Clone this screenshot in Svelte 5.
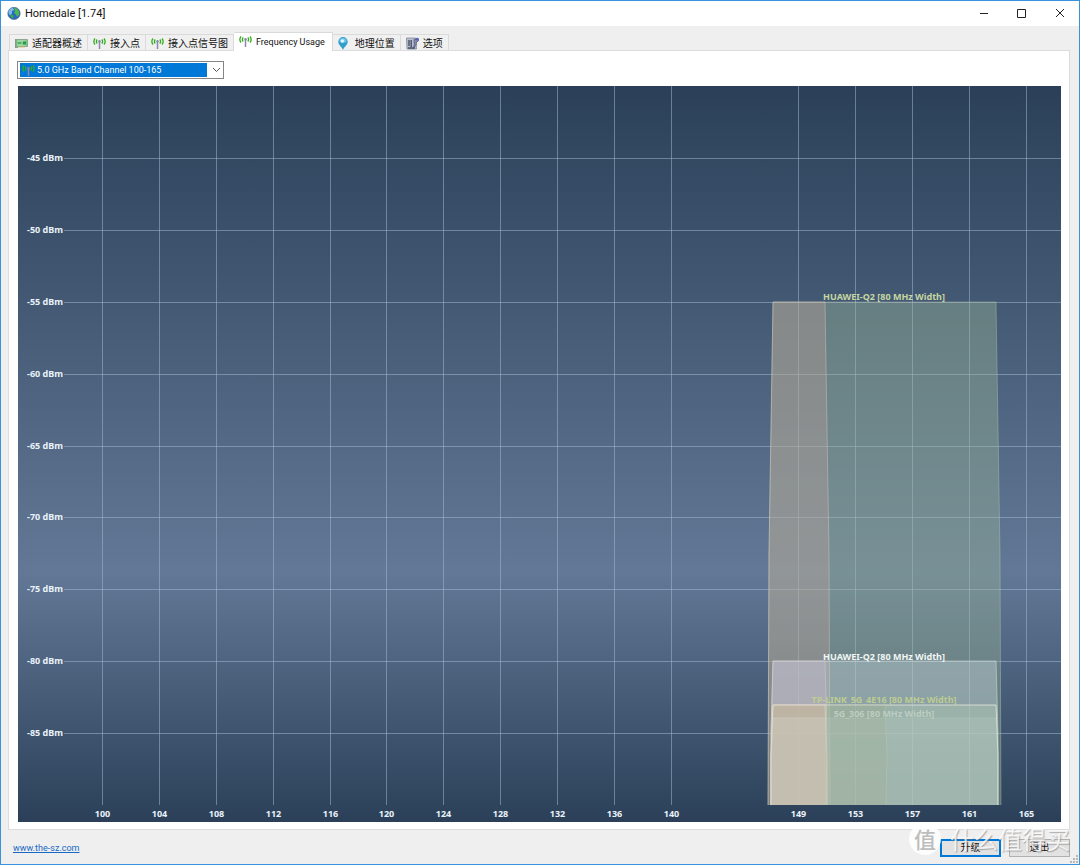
<script lang="ts">
	interface Tab {
		label: string;
		icon: 'card' | 'signal' | 'pin' | 'options';
		latin?: boolean;
	}

	interface Area {
		points: string;
		fill: string;
		stroke: string;
	}

	const tabs: Tab[] = [
		{ label: '适配器概述', icon: 'card' },
		{ label: '接入点', icon: 'signal' },
		{ label: '接入点信号图', icon: 'signal' },
		{ label: 'Frequency Usage', icon: 'signal', latin: true },
		{ label: '地理位置', icon: 'pin' },
		{ label: '选项', icon: 'options' }
	];

	let active = $state(3);

	const levels = [-45, -50, -55, -60, -65, -70, -75, -80, -85];
	const channels = [100, 104, 108, 112, 116, 120, 124, 128, 132, 136, 140, 149, 153, 157, 161, 165];

	const channelX = (ch: number) => Math.round(84.2 + (ch - 100) * 14.21) + 0.5;
	const levelY = (dbm: number) => Math.round(72 + (-45 - dbm) * 14.375) + 0.5;

	const baseline = 719;

	// Each network is a trapezoid that widens slightly toward the baseline
	function area(left: number, right: number, top: number, spread: number, fill: string, stroke: string): Area {
		const mid = Math.round(top + (baseline - top) * 0.5);
		const half = Math.round(spread / 2) + 1;
		return {
			points: `${left - spread},${baseline} ${left - half},${mid} ${left},${top} ${right},${top} ${right + half},${mid} ${right + spread},${baseline}`,
			fill,
			stroke
		};
	}

	const areas: Area[] = [
		area(755, 978, 216, 5, 'rgba(155, 183, 149, 0.4)', 'rgba(200, 215, 190, 0.35)'),
		area(755, 807, 216, 5, 'rgba(206, 163, 157, 0.3)', 'rgba(215, 205, 190, 0.45)'),
		area(755, 978, 575, 2, 'rgba(197, 213, 219, 0.4)', 'rgba(225, 230, 230, 0.5)'),
		area(755, 807, 575, 2, 'rgba(203, 187, 213, 0.3)', 'rgba(225, 215, 215, 0.4)'),
		area(755, 978, 619, 2, 'rgba(178, 205, 180, 0.4)', 'rgba(235, 235, 225, 0.75)'),
		area(755, 807, 619, 2, 'rgba(212, 172, 138, 0.4)', 'rgba(235, 225, 210, 0.5)'),
		area(809, 867, 619, 1, 'rgba(155, 165, 125, 0.25)', 'rgba(200, 215, 180, 0.3)'),
		area(755, 978, 632, 2, 'rgba(190, 208, 200, 0.22)', 'rgba(205, 220, 205, 0.2)'),
		area(755, 807, 632, 2, 'rgba(220, 208, 195, 0.25)', 'rgba(225, 220, 210, 0.2)')
	];

	const networks = [
		{ name: 'HUAWEI-Q2 [80 MHz Width]', y: 214, color: '#c6d6a1' },
		{ name: 'HUAWEI-Q2 [80 MHz Width]', y: 574, color: '#f2f6f4' },
		{ name: 'TP-LINK_5G_4E16 [80 MHz Width]', y: 617, color: '#bdcc92' },
		{ name: '5G_306 [80 MHz Width]', y: 631, color: '#bccdc1' }
	];
</script>

{#snippet signalIcon()}
	<svg class="icon" viewBox="0 0 13 13" aria-hidden="true">
		<g fill="none" stroke="#32b01c" stroke-width="1.3">
			<path d="M2 1.5Q-.3 4.5 2 7.5M4.2 2.5Q2.6 4.5 4.2 6.5M11 1.5Q13.3 4.5 11 7.5M8.8 2.5Q10.4 4.5 8.8 6.5" />
		</g>
		<path d="M6.5 4.5V12" stroke="#8f88ad" stroke-width="1.5" />
		<circle cx="6.5" cy="4.3" r="1.2" fill="#8b83b5" />
	</svg>
{/snippet}

{#snippet tabIcon(name: Tab['icon'])}
	{#if name === 'signal'}
		{@render signalIcon()}
	{:else if name === 'card'}
		<svg class="icon" viewBox="0 0 13 13" aria-hidden="true">
			<path d="M.5 2V11" stroke="#8b9b91" />
			<path d="M1 2.5h11.5v7H3v1H1z" fill="#7cc886" stroke="#78917c" stroke-width=".7" />
			<path d="M2.5 4h8M2.5 8h8" stroke="#c4e9c4" stroke-width=".9" />
			<path d="M3 5h3v2H3z" fill="#4fae62" />
			<path d="M8 4.5h3v3H8z" fill="#279b46" />
			<path d="M4 10h6" stroke="#d4b85b" stroke-width=".8" />
		</svg>
	{:else if name === 'pin'}
		<svg class="icon" viewBox="0 0 13 13" aria-hidden="true">
			<path d="M5 13C4 9.8.3 8 .3 4.7a4.7 4.7 0 0 1 9.4 0C9.7 8 6 9.8 5 13z" fill="#319fce" />
			<path d="M1.5 4.5a3.5 3.5 0 0 1 7 0C7 6.4 3.5 6.4 1.5 4.5z" fill="#70c9ec" />
			<circle cx="4.3" cy="4" r="1.7" fill="#e5f8ff" />
		</svg>
	{:else}
		<svg class="icon" viewBox="0 0 13 13" aria-hidden="true">
			<path d="M.5 1h9l1 11H1z" fill="#b9c0cd" stroke="#7f8799" stroke-width=".8" />
			<path d="M3 3v6M5.2 3v7M2 11h7" stroke="#454f68" stroke-width="1.4" />
			<path d="M7 10.5c2-1 1-4.5 1-8L12 1.5c1 2 .5 3-1.5 3.5-.5 2 .5 4.5-3.5 5.5z" fill="#8489b6" stroke="#505779" stroke-width=".8" />
			<circle cx="11.3" cy="2.2" r="1.4" fill="#5963b4" />
		</svg>
	{/if}
{/snippet}

<div class="window">
	<header class="titlebar">
		<svg class="globe" viewBox="0 0 14 14" aria-hidden="true">
			<circle cx="7" cy="6.4" r="6.2" fill="#2868c4" stroke="#4b6787" stroke-width=".6" />
			<path d="M1.5 4Q3 1 5.5.8L7.5 3 5 4 5 6.5 3.5 8.5Q1 7 1.5 4z" fill="#7fb9e6" />
			<path d="M7 .8l3 .8L12.5 5 12 8 10 10 9 7.5 7 6 8 4z" fill="#4db651" />
			<path d="M3 7.5l3 .5 1 1.5-1.5 2Q3 10.5 3 7.5z" fill="#3ba548" />
		</svg>
		<h1>Homedale [1.74]</h1>
		<div class="controls">
			<button aria-label="Minimize"><svg viewBox="0 0 10 10"><path d="M1 4.5h8" /></svg></button>
			<button aria-label="Maximize"><svg viewBox="0 0 10 10"><path d="M.5.5h8v8h-8z" /></svg></button>
			<button aria-label="Close"><svg viewBox="0 0 10 10"><path d="M1 0l8 8M9 0L1 8" /></svg></button>
		</div>
	</header>

	<div class="tabs" role="tablist">
		{#each tabs as tab, i}
			<button class="tab" class:active={active === i} class:latin={tab.latin} role="tab" aria-selected={active === i} onclick={() => (active = i)}>
				{@render tabIcon(tab.icon)}
				<span>{tab.label}</span>
			</button>
		{/each}
	</div>

	<main class="panel">
		<div class="combo">
			<select aria-label="Band">
				<option>5.0 GHz Band Channel 100-165</option>
			</select>
			<span class="combo-icon">{@render signalIcon()}</span>
			<svg class="chevron" viewBox="0 0 9 6" aria-hidden="true"><path d="M1 1l3.5 3.5L8 1" /></svg>
		</div>

		<svg class="chart" viewBox="0 0 1043 736" role="img" aria-label="Frequency Usage">
			<defs>
				<linearGradient id="backdrop" x1="0" y1="0" x2="0" y2="1">
					<stop offset="0" stop-color="#2b4058" />
					<stop offset="0.66" stop-color="#627896" />
					<stop offset="1" stop-color="#2b4058" />
				</linearGradient>
			</defs>
			<rect width="1043" height="736" fill="url(#backdrop)" />

			<g class="grid">
				{#each levels as level}
					<line x1="46" x2="1043" y1={levelY(level)} y2={levelY(level)} />
				{/each}
				{#each channels as channel}
					<line x1={channelX(channel)} x2={channelX(channel)} y1="0" y2={baseline} />
				{/each}
			</g>

			{#each areas as a}
				<polygon points={a.points} fill={a.fill} />
				<polyline points={a.points} fill="none" stroke={a.stroke} />
			{/each}

			<g class="labels">
				{#each levels as level}
					<text x="9" y={levelY(level) + 2.5}>{level} dBm</text>
				{/each}
				{#each channels as channel}
					<text class="center" x={channelX(channel)} y="731">{channel}</text>
				{/each}
				{#each networks as network}
					<text class="center" x="866" y={network.y} style:fill={network.color}>{network.name}</text>
				{/each}
			</g>
		</svg>
	</main>

	<footer>
		<a class="latin" href="http://www.the-sz.com">www.the-sz.com</a>
		<div class="actions">
			<button class="primary">升级</button>
			<button>退出</button>
		</div>
		<div class="watermark" aria-hidden="true">
			<span class="badge">值</span>
			<span class="brand">什么值得买</span>
		</div>
		<svg class="grip" viewBox="0 0 8 8" aria-hidden="true">
			<path d="M6 0h2v2H6zM3 3h2v2H3zM6 3h2v2H6zM0 6h2v2H0zM3 6h2v2H3zM6 6h2v2H6z" fill="#b8b8b8" />
		</svg>
	</footer>
</div>

<style>
	:global(body) {
		margin: 0;
	}

	.window {
		box-sizing: border-box;
		min-height: 100vh;
		border: 1px solid #3993dc;
		background: #efefef;
		font-family: Roboto, 'Noto Sans CJK SC', sans-serif;
		font-size: 10px;
		color: #111;
		display: flex;
		flex-direction: column;
	}

	button,
	select {
		font: inherit;
		color: inherit;
	}

	.titlebar {
		display: flex;
		align-items: center;
		height: 25px;
		padding-left: 6px;
		background: #fff;
	}

	.globe {
		width: 14px;
		height: 14px;
	}

	h1 {
		margin: 0 0 0 4px;
		font-size: 11px;
		font-weight: normal;
		line-height: 16px;
	}

	.controls {
		display: flex;
		margin-left: auto;
	}

	.controls button {
		display: grid;
		place-items: center;
		width: 38px;
		height: 24px;
		padding: 0;
		border: 0;
		background: none;
	}

	.controls svg {
		width: 10px;
		height: 10px;
		fill: none;
		stroke: #222;
	}

	.tabs {
		display: flex;
		align-items: flex-end;
		height: 24px;
		padding-left: 8px;
	}

	.tab {
		display: flex;
		align-items: center;
		box-sizing: border-box;
		gap: 4px;
		height: 16px;
		padding: 2px 5px 0;
		border: 1px solid #dadada;
		border-width: 1px 1px 0 0;
		background: #f0f0f0;
		line-height: 14px;
		white-space: nowrap;
	}

	.tab:first-child {
		border-left-width: 1px;
	}

	.tab.active {
		height: 19px;
		margin-bottom: -1px;
		padding: 0 7px 1px 5px;
		background: #fff;
		position: relative;
	}

	.latin {
		font-size: 9px;
	}

	.icon {
		display: block;
		width: 13px;
		height: 13px;
		flex: none;
	}

	.panel {
		margin: 0 9px 0 7px;
		padding: 10px 8px 7px 9px;
		border: 1px solid #dcdcdc;
		background: #fff;
	}

	.combo {
		display: grid;
		align-items: center;
		box-sizing: border-box;
		width: 207px;
		height: 18px;
		margin-bottom: 7px;
		margin-left: -1px;
		border: 1px solid #858585;
	}

	.combo > * {
		grid-area: 1 / 1;
	}

	select {
		appearance: none;
		width: 100%;
		height: 16px;
		padding: 0 20px 0 17px;
		border: 1px solid #fff;
		border-left-width: 2px;
		background: linear-gradient(#0078d7, #0078d7) no-repeat 0 0 / 187px 14px;
		color: #fff;
		font-size: 9px;
		line-height: 14px;
	}

	.combo-icon {
		justify-self: start;
		margin-left: 4px;
		pointer-events: none;
	}

	.chevron {
		justify-self: end;
		width: 9px;
		height: 6px;
		margin-right: 2px;
		fill: none;
		stroke: #555;
		pointer-events: none;
	}

	.chart {
		display: block;
		width: 100%;
		height: auto;
	}

	.grid line {
		stroke: rgba(165, 190, 215, 0.5);
	}

	.labels {
		font: bold 9px 'Noto Sans', sans-serif;
		fill: #e9f2fa;
	}

	.center {
		text-anchor: middle;
	}

	footer {
		position: relative;
		display: flex;
		align-items: center;
		justify-content: space-between;
		flex: 1;
		padding: 2px 9px 0 12px;
	}

	a {
		color: #1769c5;
	}

	.actions {
		display: flex;
		gap: 8px;
	}

	.actions button {
		width: 61px;
		height: 18px;
		padding: 0;
		border: 1px solid #b0b0b0;
		background: #e2e2e2;
		line-height: 14px;
	}

	.actions .primary {
		border: 2px solid #0078d7;
	}

	.watermark {
		position: absolute;
		right: 9px;
		bottom: 9px;
		display: flex;
		align-items: center;
		gap: 9px;
		font-family: 'Noto Sans CJK SC', sans-serif;
		color: rgba(255, 255, 255, 0.8);
		pointer-events: none;
	}

	.badge {
		width: 32px;
		height: 32px;
		border-radius: 50%;
		background: rgba(255, 255, 255, 0.85);
		color: #bdbdbd;
		font-size: 22px;
		font-weight: 500;
		line-height: 31px;
		text-align: center;
	}

	.brand {
		font-size: 24px;
		line-height: 32px;
		text-shadow: 1px 1px 1px rgba(110, 110, 110, 0.5);
	}

	.grip {
		position: absolute;
		right: 1px;
		bottom: 1px;
		width: 8px;
		height: 8px;
	}
</style>
